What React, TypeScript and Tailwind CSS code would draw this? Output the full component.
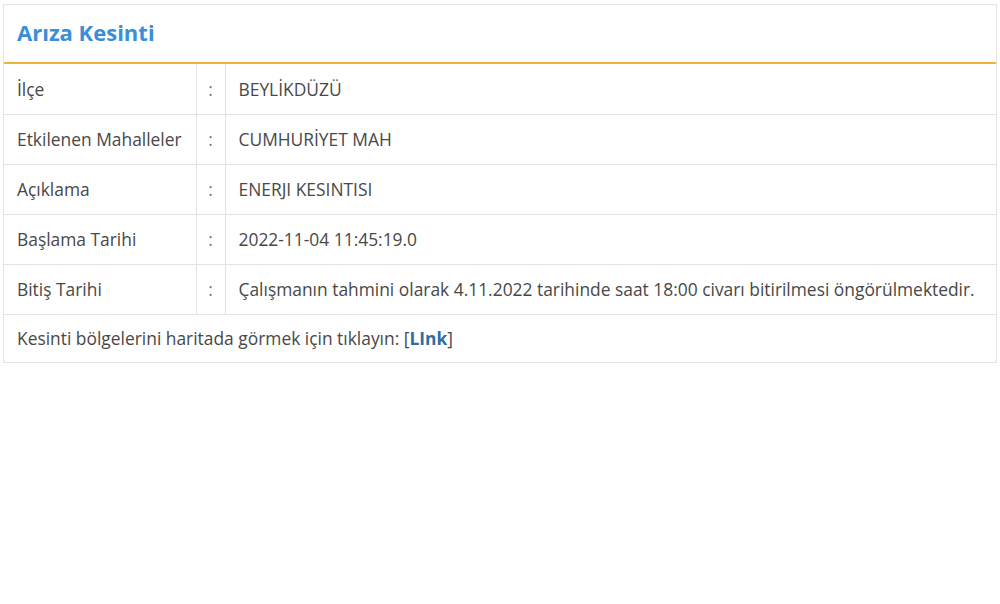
import React from "react";

const rows: [string, string][] = [
  ["İlçe", "BEYLİKDÜZÜ"],
  ["Etkilenen Mahalleler", "CUMHURİYET MAH"],
  ["Açıklama", "ENERJI KESINTISI"],
  ["Başlama Tarihi", "2022-11-04 11:45:19.0"],
  [
    "Bitiş Tarihi",
    "Çalışmanın tahmini olarak 4.11.2022 tarihinde saat 18:00 civarı bitirilmesi öngörülmektedir.",
  ],
];

export default function App() {
  return (
    <div
      className="w-[1000px] h-[604px] bg-white pl-[3px] pt-[4px]"
      style={{ fontFamily: '"Open Sans", "Noto Sans", sans-serif' }}
    >
      <div className="w-[994px] border border-[#e2e2e2] bg-white">
        <div className="h-[59px] flex items-center px-[13px] pb-[3px] border-b-2 border-[#f0b43c]">
          <h1 className="text-[22px] font-bold text-[#3a8fd6] leading-none">Arıza Kesinti</h1>
        </div>
        <table className="w-full border-collapse text-[17.4px] text-[#484848]">
          <tbody>
            {rows.map(([k, v], i) => (
              <tr key={i} className="h-[50px]">
                <td className={`w-[192px] pl-[13px] border-r border-[#e2e2e2] ${i === 0 ? "" : "border-t"}`}>{k}</td>
                <td className={`w-[29px] text-center text-[#777] border-r border-[#e2e2e2] ${i === 0 ? "" : "border-t"}`}>:</td>
                <td className={`pl-[13px] border-[#e2e2e2] ${i === 0 ? "" : "border-t"}`}>{v}</td>
              </tr>
            ))}
            <tr className="h-[48px]">
              <td colSpan={3} className="pl-[13px] border-t border-[#e2e2e2]">
                Kesinti bölgelerini haritada görmek için tıklayın: [
                <a className="font-bold text-[#2e6da4]" href="#">LInk</a>]
              </td>
            </tr>
          </tbody>
        </table>
      </div>
    </div>
  );
}
